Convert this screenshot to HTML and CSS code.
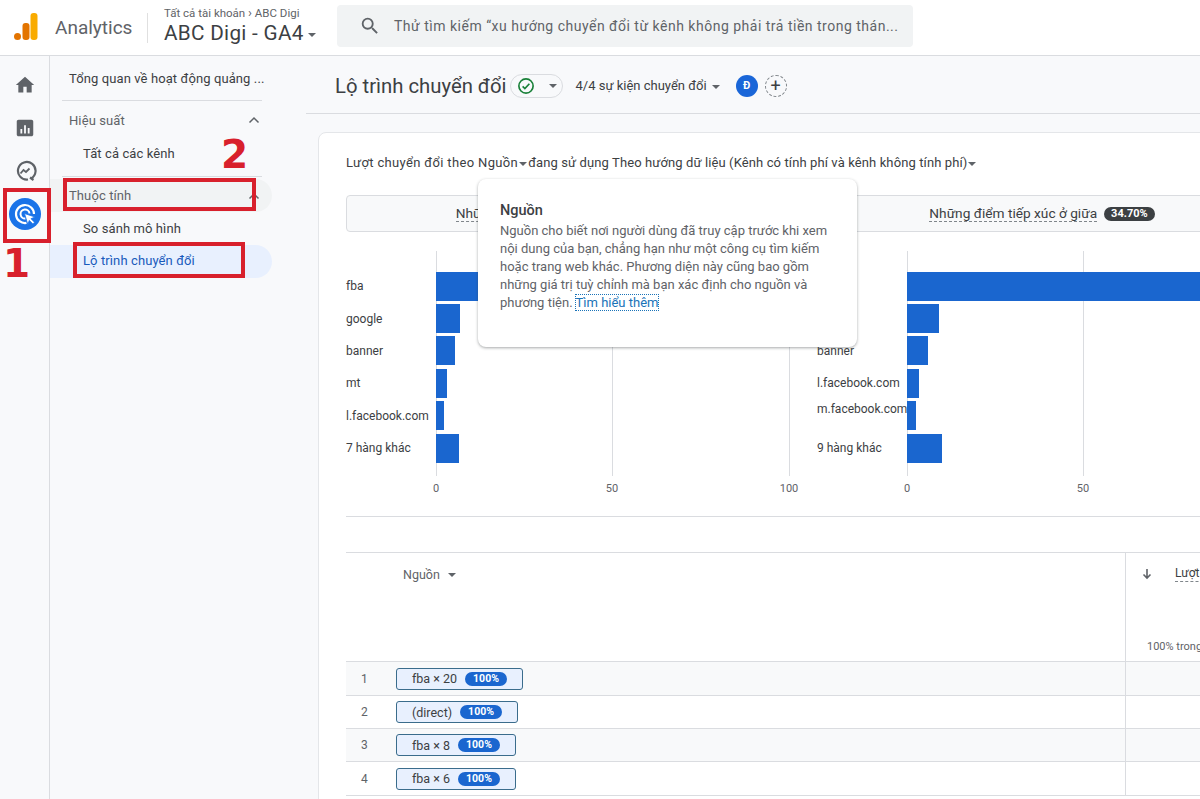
FILE: index.html
```html
<!DOCTYPE html>
<html lang="vi">
<head>
<meta charset="utf-8">
<title>Lộ trình chuyển đổi - Analytics</title>
<link rel="stylesheet" href="styles.css">
</head>
<body>
<div class="app">
  <header class="topbar">
    <svg class="logo" viewBox="0 0 24 28" width="24" height="28"><rect x="16.500" y="0" width="7" height="27" rx="3" fill="#f9ab00"/><rect x="8.500" y="10" width="7" height="17" rx="3" fill="#e37400"/><circle cx="3.500" cy="23.500" r="3.500" fill="#e37400"/></svg>
    <span class="brand">Analytics</span>
    <span class="topdiv"></span>
    <div class="account">
      <div class="crumb">Tất cả tài khoản <span class="crumbsep">›</span> ABC Digi</div>
      <div class="prop">ABC Digi - GA4<span class="caret caret-prop"></span></div>
    </div>
    <div class="search">
      <svg class="searchicon" viewBox="0 0 24 24" width="22" height="22"><path fill="#5f6368" d="M15.500 14h-.79l-.28-.27A6.470 6.470 0 0 0 16 9.500 6.500 6.500 0 1 0 9.500 16c1.610 0 3.090-.59 4.230-1.570l.27.28v.79l5 4.990L20.490 19l-4.990-5zm-6 0C7.010 14 5 11.990 5 9.500S7.010 5 9.500 5 14 7.010 14 9.500 11.990 14 9.500 14z"/></svg>
      <span>Thử tìm kiếm “xu hướng chuyển đổi từ kênh không phải trả tiền trong thán...</span>
    </div>
  </header>

  <div class="body">
    <nav class="rail">
      <span class="railitem"><svg viewBox="0 0 24 24" width="20" height="20"><path fill="#5f6368" d="M10 21v-7h4v7h6v-9h3L12 2 1 12h3v9z"/></svg></span>
      <span class="railitem"><svg viewBox="0 0 24 24" width="22" height="22"><path fill="#5f6368" d="M19 3H5c-1.100 0-2 .9-2 2v14c0 1.100.9 2 2 2h14c1.100 0 2-.9 2-2V5c0-1.100-.9-2-2-2zM9 18H7v-5h2v5zm4 0h-2V9h2v9zm4 0h-2v-6h2v6z"/></svg></span>
      <span class="railitem"><svg viewBox="0 0 24 24" width="24" height="24" fill="none" stroke="#5f6368" stroke-width="2.200"><path d="M18 19.500A8.800 8.800 0 1 0 15 20.500"/><path d="M7.500 14.500l3-3.500 2.500 2 3.500-3.500" stroke-width="1.800"/><path d="M17 18.500l3.500 2.500"/></svg></span>
      <span class="railitem railactive"><svg viewBox="0 0 32 32" width="32" height="32"><circle cx="16" cy="16" r="16" fill="#1a73e8"/><path d="M25 16a9 9 0 1 0-7.500 8.900" fill="none" stroke="#fff" stroke-width="2.200"/><path d="M20.500 15.500a4.500 4.500 0 1 0-4 5" fill="none" stroke="#fff" stroke-width="2"/><path d="M15.500 15.500l10.500 3.500-4 1.700 3.500 3.500-1.700 1.700-3.500-3.500-1.500 4z" fill="#fff" stroke="#1a73e8" stroke-width=".8"/></svg></span>
    </nav>

    <aside class="side">
      <div class="sidehead">Tổng quan về hoạt động quảng ...</div>
      <div class="sidegroup sg1"><span>Hiệu suất</span><svg class="chev" viewBox="0 0 12 8" width="12" height="8"><path d="M1.500 6.500L6 2l4.500 4.500" fill="none" stroke="#5f6368" stroke-width="1.500"/></svg></div>
      <div class="sideitem si1">Tất cả các kênh</div>
      <div class="sidegroup sg2"><span>Thuộc tính</span><svg class="chev" viewBox="0 0 12 8" width="12" height="8"><path d="M1.500 6.500L6 2l4.500 4.500" fill="none" stroke="#5f6368" stroke-width="1.500"/></svg></div>
      <div class="sideitem si2">So sánh mô hình</div>
      <div class="sideitem selected">Lộ trình chuyển đổi</div>
    </aside>

    <main class="main">
      <div class="titlebar">
        <h1>Lộ trình chuyển đổi</h1>
        <span class="statuspill">
          <svg viewBox="0 0 24 24" width="18" height="18" fill="none" stroke="#188038" stroke-width="2.200"><circle cx="12" cy="12" r="9.500"/><path d="M7.500 12.500l3 3 6-6.500"/></svg>
          <span class="caret"></span>
        </span>
        <span class="events">4/4 sự kiện chuyển đổi<span class="caret caret-ev"></span></span>
        <span class="avatar">Đ</span>
        <span class="addbtn">+</span>
      </div>

      <section class="card">
        <div class="cardtitle"><span class="ct-lead">Lượt chuyển đổi theo Nguồn</span><span class="caret caret-t"></span>đang sử dụng Theo hướng dữ liệu (Kênh có tính phí và kênh không tính phí)<span class="caret caret-t"></span></div>

        <div class="tabs">
          <div class="tab tab1"><span class="dashed">Những điểm tiếp xúc đầu tiên</span><span class="chipdark">46.90%</span></div>
          <div class="tab tab2"><span class="dashed">Những điểm tiếp xúc ở giữa</span><span class="chipdark">34.70%</span></div>
        </div>

        <div class="charts">
          <div class="chart">
            <span class="grid g0"></span><span class="grid g50"></span><span class="grid g100"></span>
            <div class="brow"><span class="blabel">fba</span><span class="bar" style="width:360px"></span></div>
            <div class="brow"><span class="blabel">google</span><span class="bar" style="width:24px"></span></div>
            <div class="brow"><span class="blabel">banner</span><span class="bar" style="width:19px"></span></div>
            <div class="brow"><span class="blabel">mt</span><span class="bar" style="width:11px"></span></div>
            <div class="brow"><span class="blabel">l.facebook.com</span><span class="bar" style="width:8px"></span></div>
            <div class="brow"><span class="blabel">7 hàng khác</span><span class="bar" style="width:23px"></span></div>
            <div class="axis"><span class="tick t0">0</span><span class="tick t50">50</span><span class="tick t100">100</span></div>
          </div>
          <div class="chart">
            <span class="grid g0"></span><span class="grid g50"></span><span class="grid g100"></span>
            <div class="brow"><span class="blabel">fba</span><span class="bar" style="width:380px"></span></div>
            <div class="brow"><span class="blabel">google</span><span class="bar" style="width:32px"></span></div>
            <div class="brow"><span class="blabel">banner</span><span class="bar" style="width:21px"></span></div>
            <div class="brow"><span class="blabel">l.facebook.com</span><span class="bar" style="width:12px"></span></div>
            <div class="brow"><span class="blabel raised">m.facebook.com</span><span class="bar" style="width:9px"></span></div>
            <div class="brow"><span class="blabel">9 hàng khác</span><span class="bar" style="width:35px"></span></div>
            <div class="axis"><span class="tick t0">0</span><span class="tick t50">50</span><span class="tick t100">100</span></div>
          </div>
        </div>

        <div class="table">
          <div class="thead">
            <div class="namecell headname">Nguồn<span class="caret caret-h"></span></div>
            <div class="valcell headval">
              <div class="headtop"><svg viewBox="0 0 12 12" width="12" height="12"><path d="M6 1v9M2.500 6.500L6 10l3.500-3.500" fill="none" stroke="#5f6368" stroke-width="1.600"/></svg><span class="dashed">Lượt chuyển đổi</span></div>
              <div class="headsub">100% trong tổng số</div>
            </div>
          </div>
          <div class="trow alt"><div class="namecell"><span class="num">1</span><span class="pathchip c1">fba × 20<span class="pct">100%</span></span></div><div class="valcell"></div></div>
          <div class="trow"><div class="namecell"><span class="num">2</span><span class="pathchip c2">(direct)<span class="pct">100%</span></span></div><div class="valcell"></div></div>
          <div class="trow alt"><div class="namecell"><span class="num">3</span><span class="pathchip c3">fba × 8<span class="pct">100%</span></span></div><div class="valcell"></div></div>
          <div class="trow"><div class="namecell"><span class="num">4</span><span class="pathchip c3">fba × 6<span class="pct">100%</span></span></div><div class="valcell"></div></div>
        </div>
      </section>
    </main>
  </div>

  <div class="tooltip">
    <div class="tiptitle">Nguồn</div>
    <p>Nguồn cho biết nơi người dùng đã truy cập trước khi xem<br>nội dung của bạn, chẳng hạn như một công cụ tìm kiếm<br>hoặc trang web khác. Phương diện này cũng bao gồm<br>những giá trị tuỳ chỉnh mà bạn xác định cho nguồn và<br>phương tiện. <a class="tiplink">Tìm hiểu thêm</a></p>
  </div>

  <span class="mark m-rail"></span>
  <span class="mark m-prop"></span>
  <span class="mark m-path"></span>
  <span class="marknum n1">1</span>
  <span class="marknum n2">2</span>
</div>
</body>
</html>
```
FILE: styles.css
```css
* { box-sizing: border-box; }
html, body { margin: 0; height: 799px; overflow: hidden; background: #fff; }
body { font-family: Roboto, "Noto Sans", Arial, sans-serif; color: #3c4043; font-size: 12px; }
.app { position: relative; width: 1200px; height: 799px; overflow: hidden; display: flex; flex-direction: column; }

.caret { display: inline-block; width: 0; height: 0; border-left: 4px solid transparent; border-right: 4px solid transparent; border-top: 4px solid #5f6368; vertical-align: middle; }

/* top bar */
.topbar { height: 56px; flex: none; display: flex; align-items: center; border-bottom: 1px solid #dadce0; padding-left: 14px; background: #fff; }
.logo { flex: none; margin-top: -1px; }
.brand { margin-left: 17px; font-size: 19px; color: #5f6368; width: 75px; margin-top: -1px; }
.topdiv { width: 1px; height: 30px; background: #e0e0e0; margin: 0 16px 0 17px; }
.account { width: 173px; flex: none; }
.crumb { font-size: 11.500px; color: #5f6368; line-height: 13px; margin-top: -3px; white-space: nowrap; }
.crumbsep { font-size: 13px; }
.prop { font-size: 20.700px; line-height: 26px; color: #3c4043; white-space: nowrap; letter-spacing: .3px; }
.caret-prop { margin-left: 4px; }
.search { width: 576px; height: 42px; margin-top: -3px; background: #f1f3f4; border-radius: 4px; display: flex; align-items: center; padding-left: 22px; font-size: 14px; color: #5f6368; white-space: nowrap; letter-spacing: .5px; }
.searchicon { margin-right: 13px; flex: none; }

.body { flex: 1; display: flex; min-height: 0; background: #f8f9fb; }

/* rail */
.rail { width: 50px; flex: none; border-right: 1px solid #dadce0; display: flex; flex-direction: column; align-items: center; padding-top: 7px; }
.railitem { height: 43px; display: flex; align-items: center; justify-content: center; }
.railactive { height: 43px; }

/* side nav */
.side { width: 256px; flex: none; font-size: 13px; color: #3c4043; letter-spacing: .1px; }
.sidehead { margin-left: 12px; width: 200px; height: 45px; padding: 15px 0 0 7px; border-bottom: 1px solid #dadce0; white-space: nowrap; line-height: 16px; }
.sidegroup { height: 33px; display: flex; align-items: center; justify-content: space-between; padding: 0 12px 0 19px; color: #5f6368; width: 222px; }
.sg1 { margin-top: 2px; height: 34px; }
.sg2 { border-radius: 0 17px 17px 0; background: #f1f3f4; margin-top: 2px; }
.sideitem { height: 32px; padding-left: 33px; line-height: 32px; width: 222px; }
.si1 { height: 40px; line-height: 34px; position: relative; }
.si1::after { content: ""; position: absolute; left: 12px; right: 10px; bottom: 0; height: 1px; background: #dadce0; }
.si2 { height: 33px; line-height: 34px; }
.selected { background: #e8f0fe; color: #185abc; border-radius: 0 17px 17px 0; height: 33px; line-height: 32px; }

/* main */
.main { flex: 1; min-width: 0; overflow: hidden; }
.titlebar { height: 58px; margin-left: 0; border-bottom: 1px solid #dadce0; display: flex; align-items: center; padding-left: 29px; padding-top: 2px; margin-right: -20px; }
.titlebar h1 { margin: 0; font-size: 20.300px; font-weight: 400; color: #3c4043; line-height: 28px; white-space: nowrap; }
.statuspill { width: 53px; height: 24px; margin-left: 3px; border: 1px solid #dadce0; border-radius: 12px; display: flex; align-items: center; gap: 14px; padding-left: 6px; }
.events { font-size: 13px; margin-left: 13px; white-space: nowrap; color: #3c4043; }
.caret-ev { margin-left: 5px; }
.avatar { width: 22px; height: 22px; margin-left: 16px; border-radius: 50%; background: #1a66d8; color: #fff; font-size: 11px; font-weight: 700; display: flex; align-items: center; justify-content: center; }
.addbtn { width: 22px; height: 22px; margin-left: 7px; border-radius: 50%; border: 1px dashed #80868b; color: #3c4043; font-size: 18px; line-height: 19px; text-align: center; }

.card { width: 1000px; margin: 18px 0 0 12px; background: #fff; border: 1px solid #e4e6e9; border-radius: 8px 0 0 0; padding: 0 0 0 27px; height: 720px; }
.cardtitle { height: 62px; padding-top: 21px; font-size: 13px; line-height: 18px; white-space: nowrap; color: #3c4043; letter-spacing: .11px; }
.ct-lead { letter-spacing: .35px; }
.caret-t { margin: 0 1px; }

.tabs { display: flex; height: 37px; width: 973px; background: #f8f9fa; border: 1px solid #dadce0; border-radius: 4px 0 0 4px; }
.tab { display: flex; align-items: center; justify-content: center; gap: 7px; font-size: 13.700px; color: #3c4043; }
.tab1 { width: 454px; }
.tab2 { width: 482px; }
.dashed { border-bottom: 1px dashed #80868b; line-height: 15px; white-space: nowrap; }
.chipdark { background: #3c4043; color: #fff; font-size: 11px; font-weight: 700; border-radius: 8px; padding: 0 7px; line-height: 14px; }

.charts { display: flex; margin-top: 19px; height: 266px; border-bottom: 1px solid #dadce0; width: 973px; }
.chart { position: relative; width: 471px; padding-top: 19px; }
.grid { position: absolute; top: 0; height: 225px; width: 1px; background: #dadce0; }
.g0 { left: 90px; }
.g50 { left: 266px; }
.g100 { left: 443px; }
.brow { display: flex; align-items: center; height: 32.400px; position: relative; }
.blabel { width: 90px; flex: none; font-size: 12px; color: #3c4043; white-space: nowrap; }
.raised { padding-bottom: 14px; }
.bar { height: 29px; background: #1a66cf; flex: none; }
.axis { position: relative; height: 20px; }
.tick { position: absolute; top: 18px; font-size: 11px; color: #5f6368; transform: translateX(-50%); }
.t0 { left: 90px; }
.t50 { left: 266px; }
.t100 { left: 443px; }

.table { margin-top: 35px; width: 973px; border-top: 1px solid #dadce0; }
.thead { display: flex; height: 109px; border-bottom: 1px solid #dadce0; }
.trow { display: flex; height: 34px; border-bottom: 1px solid #dadce0; }
.trow.alt { background: #f8f9fa; height: 33px; }
.trow.alt:nth-child(2) { height: 34px; }
.trow:nth-child(3) { height: 33px; }
.namecell { width: 780px; flex: none; display: flex; align-items: center; border-right: 1px solid #dadce0; }
.valcell { flex: 1; }
.headname { align-items: flex-start; padding: 14px 0 0 57px; color: #5f6368; font-size: 12.500px; }
.caret-h { margin: 6px 0 0 8px; }
.headtop { display: flex; align-items: center; gap: 22px; padding: 13px 0 0 15px; white-space: nowrap; }
.headsub { padding: 58px 0 0 21px; font-size: 11px; color: #5f6368; white-space: nowrap; }
.num { width: 50px; padding-left: 15px; flex: none; font-size: 12px; color: #5f6368; }
.pathchip { height: 22px; display: flex; align-items: center; padding-left: 15px; background: #e8f0fe; border: 1px solid #3a6c8c; border-radius: 3px; font-size: 12.500px; color: #3c4043; white-space: nowrap; }
.c1 { width: 127px; }
.c2 { width: 122px; }
.c3 { width: 120px; }
.pct { background: #1a66cf; color: #fff; font-size: 10.500px; font-weight: 700; padding: 0 8px; border-radius: 7px; line-height: 14px; margin-left: 8px; }

/* tooltip */
.tooltip { position: absolute; left: 478px; top: 179px; width: 379px; height: 168px; background: #fff; border-radius: 8px; box-shadow: 0 1px 3px rgba(60,64,67,.45); padding: 23px 22px 0; }
.tiptitle { font-size: 14.500px; font-weight: 500; color: #3c4043; line-height: 18px; }
.tooltip p { margin: 2px 0 0; font-size: 13px; line-height: 18px; color: #5f6368; white-space: nowrap; }
.tiplink { color: #1a73b8; outline: 1px dotted #1a73b8; }

/* annotations */
.mark { position: absolute; border: 4px solid #d8202c; }
.m-rail { left: 3px; top: 188px; width: 48px; height: 55px; }
.m-prop { left: 63px; top: 178px; width: 193px; height: 33px; }
.m-path { left: 73px; top: 242px; width: 172px; height: 36px; }
.marknum { position: absolute; font-family: "DejaVu Sans", sans-serif; font-weight: 700; font-size: 39px; line-height: 40px; color: #d8202c; }
.n1 { left: 3px; top: 244px; }
.n2 { left: 221px; top: 135px; }
```
